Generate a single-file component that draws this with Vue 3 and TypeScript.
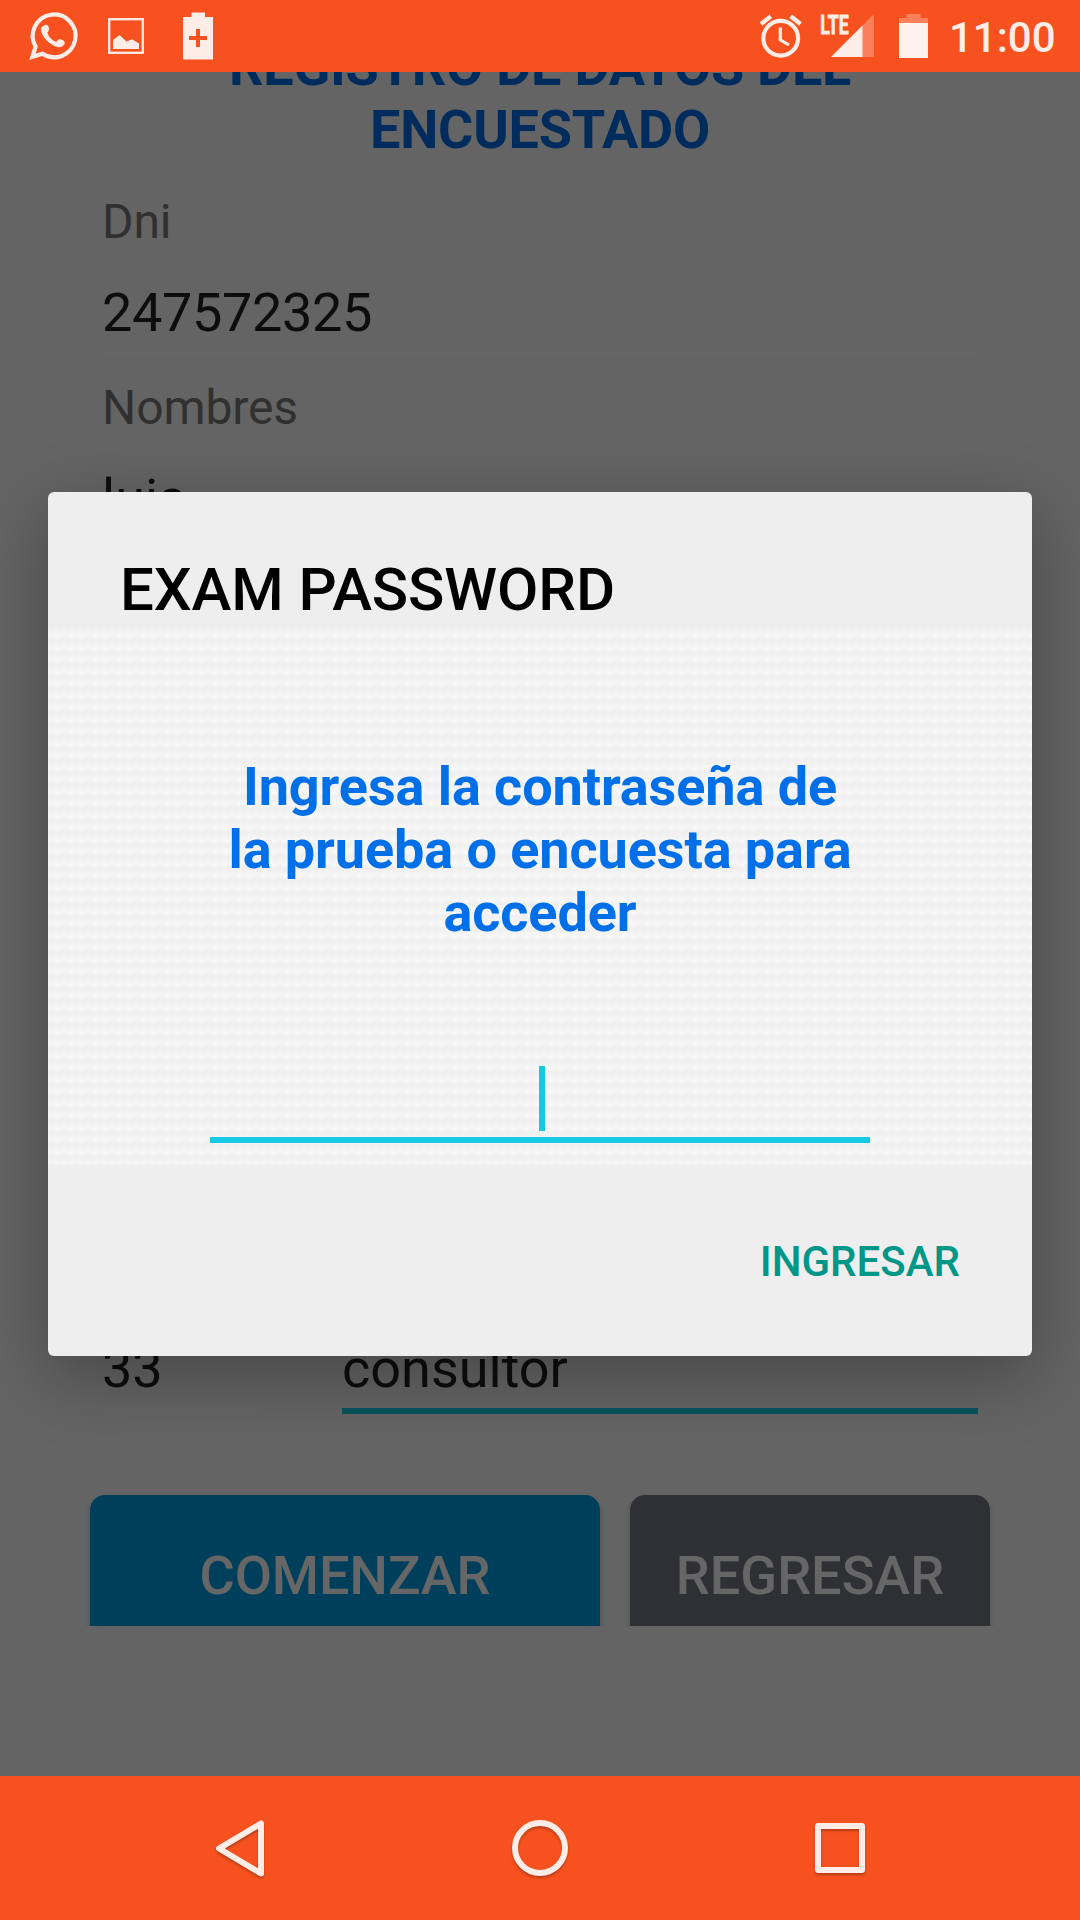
<script setup lang="ts">
import { ref } from 'vue'

interface Field {
  label: string
  value: string
  numeric: boolean
}

const fields = ref<Field[]>([
  { label: 'Dni', value: '247572325', numeric: true },
  { label: 'Nombres', value: 'luis', numeric: false },
])
const age = ref('33')
const job = ref('consultor')
const time = ref('11:00')
</script>

<template>
  <div class="phone">
    <header class="status">
      <svg class="ic-chat" width="48" height="48" viewBox="0 0 48 48">
        <path
          fill="none"
          stroke="#feece7"
          stroke-width="4.2"
          d="M3.4 44.8 6.6 34.6A21.4 21.4 0 1 1 13.4 41.8Z"
        />
        <path
          fill="#feece7"
          d="M15.5 13.3C17.7 12 19.400 13.700 19.800 15.500C20.300 17.600 19.800 19.200 18.400 20.600C19.300 24.700 23.200 28.700 27.400 29.800C28.700 27.500 30.600 26.800 32.800 27.700C35.400 28.600 36.500 30.400 35.400 32.200C33.900 34.700 30.700 35.800 27.600 34.800C20.300 32.400 13.700 25.600 12 19C11.400 16.400 12.600 14.400 15.500 13.300Z"
        />
      </svg>
      <svg class="ic-photo" width="36" height="36" viewBox="0 0 36 36">
        <rect x="1.200" y="1.200" width="33.600" height="33.600" fill="none" stroke="#feece7" stroke-width="2.300" />
        <path fill="#feece7" d="M5 31V22L11.500 17 18.500 23.500 24 21.300 31 25.500V31Z" />
      </svg>
      <svg class="ic-plus" width="30" height="48" viewBox="0 0 30 48">
        <path
          fill="#feece7"
          fill-rule="evenodd"
          d="M8.500 0.500H22V5H30V47.500H0V5H8.500ZM13 17V24H6V28H13V35H17V28H24V24H17V17Z"
        />
      </svg>
      <span class="grow"></span>
      <svg class="ic-alarm" width="44" height="44" viewBox="0 0 44 44">
        <g fill="none" stroke="#feece7">
          <circle cx="21.700" cy="24.300" r="17.400" stroke-width="4.200" />
          <path stroke-width="4.300" d="M2 10 11.800 2.200M41.500 10 31.700 2.200" />
          <path stroke-width="3.200" d="M21.300 13.500V25.800L30 31" />
        </g>
      </svg>
      <svg class="ic-signal" width="54" height="44" viewBox="0 0 54 44">
        <path fill="#fff" fill-opacity=".27" d="M53 0V43H10Z" />
        <path fill="#feece7" d="M41.500 11.500V43H10Z" />
        <text class="lte" x="-0.800" y="19.700" textLength="28.500" lengthAdjust="spacingAndGlyphs">LTE</text>
      </svg>
      <svg class="ic-batt" width="29" height="44" viewBox="0 0 29 44">
        <path fill="#fff" fill-opacity=".27" d="M7.300 0H21.500V4H29V9H0V4H7.300Z" />
        <path fill="#fef2ee" d="M0 9H29V44H0Z" />
      </svg>
      <span class="time">{{ time }}</span>
    </header>

    <main class="screen">
      <section class="form">
        <h1 class="heading">REGISTRO DE DATOS DEL<br />ENCUESTADO</h1>
        <div v-for="f in fields" :key="f.label" class="field">
          <label class="label">{{ f.label }}</label>
          <div class="value lined" :class="{ numeric: f.numeric }">{{ f.value }}</div>
        </div>
        <div class="row">
          <div class="value lined age">{{ age }}</div>
          <div class="value active">{{ job }}</div>
        </div>
        <div class="buttons">
          <button class="btn start">COMENZAR</button>
          <button class="btn back">REGRESAR</button>
        </div>
      </section>

      <div class="scrim">
        <section class="dialog">
          <h2 class="dialog-title">EXAM PASSWORD</h2>
          <div class="dialog-body">
            <p class="prompt">Ingresa la contraseña de<br />la prueba o encuesta para<br />acceder</p>
            <div class="input"><span class="caret"></span></div>
          </div>
          <footer class="dialog-foot">
            <button class="enter">INGRESAR</button>
          </footer>
        </section>
      </div>
    </main>

    <nav class="nav">
      <svg width="720" height="144" viewBox="0 0 720 144">
        <g class="keys" fill="none" stroke="#feece7" stroke-width="6" stroke-linejoin="round">
          <path d="M81 47.500V97.500L39 72.500Z" />
          <circle cx="360" cy="72" r="25" />
          <rect x="638" y="50" width="44" height="44" />
        </g>
      </svg>
    </nav>
  </div>
</template>

<style>
body {
  margin: 0;
}
</style>

<style scoped>
.phone {
  width: 1080px;
  height: 1920px;
  display: flex;
  flex-direction: column;
  overflow: hidden;
  font-family: Roboto, sans-serif;
}
.status {
  flex: none;
  height: 72px;
  display: flex;
  align-items: flex-start;
  background: #f6511e;
}
.status svg {
  flex: none;
  overflow: visible;
}
.ic-chat {
  margin: 12px 1px 0 29px;
}
.ic-photo {
  margin: 18px 0 0 30px;
}
.ic-plus {
  margin: 12px 0 0 39px;
}
.grow {
  flex: 1;
}
.ic-alarm {
  margin: 14px 18px 0 0;
}
.ic-signal {
  margin: 14px 24px 0 0;
}
.ic-batt {
  margin: 14px 21px 0 0;
}
.lte {
  font: 700 26px Roboto, sans-serif;
  fill: #feece7;
  stroke: #feece7;
  stroke-width: 0.8px;
}
.time {
  width: 131px;
  margin-top: 13px;
  font-size: 42px;
  line-height: 49px;
  font-weight: 500;
  color: #feece7;
}
.screen {
  flex: 1;
  min-height: 0;
  position: relative;
  overflow: hidden;
  background: #fafafa;
}
.form {
  display: flex;
  flex-direction: column;
  height: 1554px;
  overflow: hidden;
}
.heading {
  flex: none;
  margin: -37px 0 33px;
  font-size: 54px;
  line-height: 63px;
  font-weight: 700;
  letter-spacing: -0.25px;
  text-align: center;
  color: #006fe8;
}
.field {
  flex: none;
  height: 186px;
  padding: 0 102px;
}
.label {
  display: block;
  margin-bottom: 31px;
  font-size: 48px;
  line-height: 56px;
  letter-spacing: -0.1px;
  color: #787878;
}
.value {
  box-sizing: border-box;
  height: 77px;
  font-size: 54px;
  line-height: 63px;
  color: #212121;
}
.lined {
  height: 74px;
  border-bottom: 3px solid #fff;
}
.numeric {
  letter-spacing: -0.35px;
}
.row {
  flex: none;
  display: flex;
  align-items: flex-start;
  gap: 82px;
  margin-top: auto;
  padding: 0 102px;
}
.age {
  width: 158px;
}
.row .active {
  flex: 1;
  border-bottom: 6px solid #16cae6;
}
.buttons {
  flex: none;
  display: flex;
  gap: 30px;
  height: 131px;
  margin-top: 81px;
  padding: 0 90px;
}
.btn {
  height: 162px;
  padding: 0 0 2px;
  border: 0;
  border-radius: 15px;
  font: 500 54px/63px Roboto, sans-serif;
  color: #fff;
  box-shadow: 0 3px 6px rgba(0, 0, 0, 0.2);
}
.start {
  width: 510px;
  background: #009ee6;
}
.back {
  width: 360px;
  background: #76787f;
}
.scrim {
  position: absolute;
  inset: 0;
  display: flex;
  align-items: center;
  justify-content: center;
  background: rgba(0, 0, 0, 0.6);
}
.dialog {
  width: 984px;
  height: 864px;
  display: flex;
  flex-direction: column;
  border-radius: 6px;
  background: #eee;
  box-shadow: 0 20px 70px rgba(0, 0, 0, 0.3);
}
.dialog-title {
  box-sizing: border-box;
  height: 136px;
  margin: 0;
  padding: 63px 72px 0;
  font-size: 60px;
  line-height: 70px;
  font-weight: 500;
  letter-spacing: -0.1px;
  color: #000;
}
.dialog-body {
  height: 536px;
  display: flex;
  flex-direction: column;
  align-items: center;
  background:
    radial-gradient(circle, rgba(255, 255, 255, 0.6), rgba(255, 255, 255, 0) 3px) 4px 3px / 12px 12px,
    radial-gradient(circle, rgba(0, 0, 0, 0.02), rgba(0, 0, 0, 0) 4px) 0 -2px / 8px 12px,
    linear-gradient(#f0f0f0, #f7f7f7 50%, #f0f0f0) 0 0 / 12px 12px;
}
.prompt {
  margin: 127px 0 0;
  font-size: 54px;
  line-height: 63px;
  font-weight: 700;
  letter-spacing: -0.08px;
  text-align: center;
  color: #006fe8;
}
.input {
  display: flex;
  justify-content: center;
  width: 660px;
  height: 71px;
  margin-top: 122px;
  border-bottom: 6px solid #16cae6;
}
.caret {
  width: 6px;
  height: 65px;
  margin-left: 4px;
  background: #16cae6;
}
.dialog-foot {
  flex: 1;
  display: flex;
  justify-content: flex-end;
  align-items: flex-start;
  padding: 73px 72px 0 0;
}
.enter {
  padding: 0;
  border: 0;
  background: none;
  font: 500 42px/49px Roboto, sans-serif;
  color: #009688;
}
.nav {
  flex: none;
  height: 144px;
  display: flex;
  justify-content: center;
  background: #f6511e;
}
.keys {
  filter: drop-shadow(0 2px 1px rgba(0, 0, 0, 0.25));
}
</style>
